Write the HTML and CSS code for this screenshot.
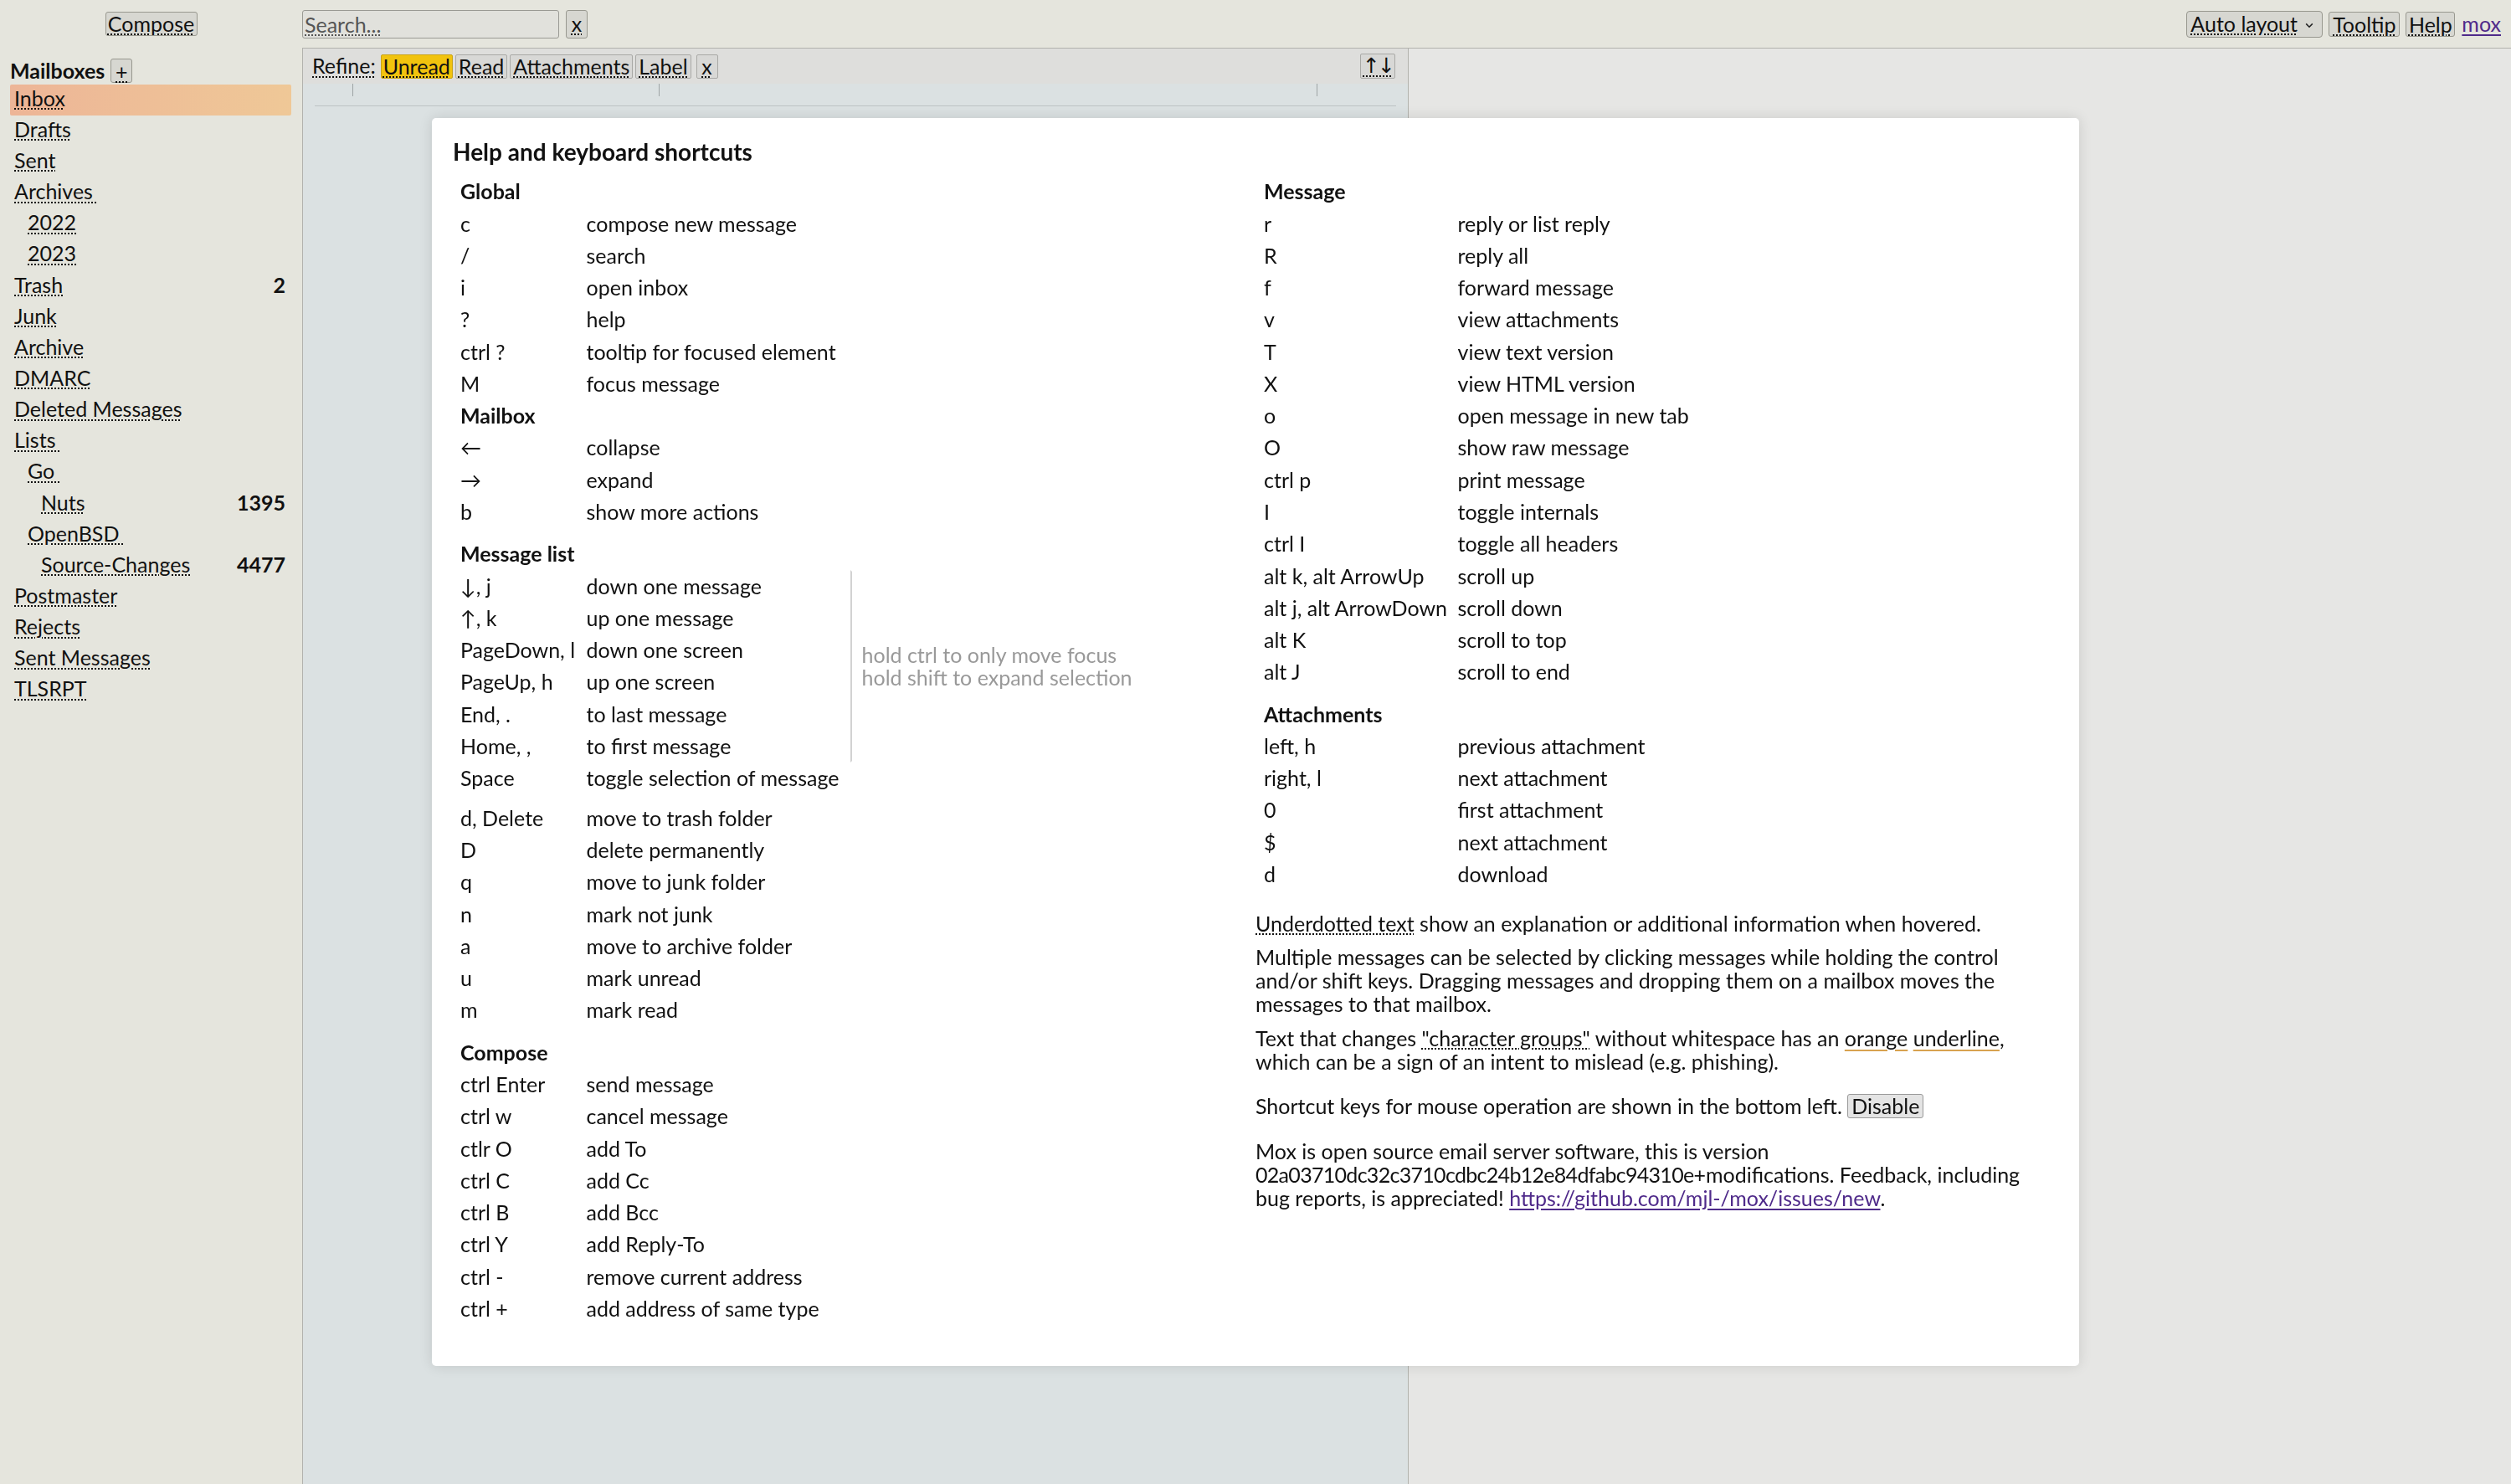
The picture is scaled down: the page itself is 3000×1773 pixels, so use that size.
FILE: index.html
```html
<!DOCTYPE html>
<html lang="en">
<head>
<meta charset="utf-8">
<title>Mox Webmail</title>
<link rel="stylesheet" href="styles.css">
</head>
<body>
<div class="app">
  <header class="topbar">
    <div class="topleft"><button class="btn compose"><span class="tt">Compose</span></button></div>
    <div class="search"><span class="tt">Search...</span></div>
    <button class="btn xbtn"><span class="tt">x</span></button>
    <div class="topright">
      <button class="btn select"><span class="tt">Auto layout</span><svg class="chev" width="10" height="7" viewBox="0 0 10 7"><path d="M1.2 1.4 L5 5.2 L8.8 1.4" fill="none" stroke="#222" stroke-width="1.5"/></svg></button>
      <button class="btn tbtn tooltip"><span class="tt">Tooltip</span></button>
      <button class="btn tbtn help"><span class="tt">Help</span></button>
      <a class="moxlink" href="#">mox</a>
    </div>
  </header>
  <div class="main">
    <aside class="mailboxes">
      <div class="mbhead"><span class="mbtitle">Mailboxes</span><button class="btn plus"><span class="tt">+</span></button></div>
      <div class="mb sel"><span class="tt">Inbox</span></div>
      <div class="mb"><span class="tt">Drafts</span></div>
      <div class="mb"><span class="tt">Sent</span></div>
      <div class="mb"><span class="tt">Archives&nbsp;</span></div>
      <div class="mb l1"><span class="tt">2022</span></div>
      <div class="mb l1"><span class="tt">2023</span></div>
      <div class="mb"><span class="tt">Trash</span><span class="cnt">2</span></div>
      <div class="mb"><span class="tt">Junk</span></div>
      <div class="mb"><span class="tt">Archive</span></div>
      <div class="mb"><span class="tt">DMARC</span></div>
      <div class="mb"><span class="tt">Deleted Messages</span></div>
      <div class="mb"><span class="tt">Lists&nbsp;</span></div>
      <div class="mb l1"><span class="tt">Go&nbsp;</span></div>
      <div class="mb l2"><span class="tt">Nuts</span><span class="cnt">1395</span></div>
      <div class="mb l1"><span class="tt">OpenBSD&nbsp;</span></div>
      <div class="mb l2"><span class="tt">Source-Changes</span><span class="cnt">4477</span></div>
      <div class="mb"><span class="tt">Postmaster</span></div>
      <div class="mb"><span class="tt">Rejects</span></div>
      <div class="mb"><span class="tt">Sent Messages</span></div>
      <div class="mb"><span class="tt">TLSRPT</span></div>
    </aside>
    <section class="msglist">
      <div class="refine">
        <span class="tt refine-label">Refine:</span>
        <div class="rgroup">
          <button class="rbtn on"><span class="tt">Unread</span></button>
          <button class="rbtn"><span class="tt">Read</span></button>
          <button class="rbtn"><span class="tt">Attachments</span></button>
          <button class="rbtn"><span class="tt">Label</span></button>
        </div>
        <button class="rbtn rx"><span class="tt">x</span></button>
        <button class="rbtn sort"><span class="tt">↑↓</span></button>
      </div>
      <div class="listhead">
        <div class="lh c1"></div><div class="lh c2"></div><div class="lh c3"></div><div class="lh c4"></div>
      </div>
    </section>
    <section class="msgview"></section>
  </div>

  <div class="overlay">
    <div class="popup">
      <h1 class="help-title">Help and keyboard shortcuts</h1>
      <div class="help-cols">
        <div class="help-col">
          <table class="keys">
            <colgroup><col class="lk"><col class="ld"><col class="ls"></colgroup>
            <tr><td colspan="3" class="k"><h2>Global</h2></td></tr>
            <tr><td class="k">c</td><td>compose new message</td></tr>
            <tr><td class="k">/</td><td>search</td></tr>
            <tr><td class="k">i</td><td>open inbox</td></tr>
            <tr><td class="k">?</td><td>help</td></tr>
            <tr><td class="k">ctrl ?</td><td>tooltip for focused element</td></tr>
            <tr><td class="k">M</td><td>focus message</td></tr>
            <tr><td colspan="3" class="k"><h2>Mailbox</h2></td></tr>
            <tr><td class="k">←</td><td>collapse</td></tr>
            <tr><td class="k">→</td><td>expand</td></tr>
            <tr><td class="k">b</td><td>show more actions</td></tr>
            <tr class="gap"><td colspan="3" class="k"><h2>Message list</h2></td></tr>
            <tr><td class="k">↓, j</td><td>down one message</td><td rowspan="6" class="side"><div>hold ctrl to only move focus</div><div>hold shift to expand selection</div></td></tr>
            <tr><td class="k">↑, k</td><td>up one message</td></tr>
            <tr><td class="k">PageDown, l</td><td>down one screen</td></tr>
            <tr><td class="k">PageUp, h</td><td>up one screen</td></tr>
            <tr><td class="k">End, .</td><td>to last message</td></tr>
            <tr><td class="k">Home, ,</td><td>to first message</td></tr>
            <tr><td class="k">Space</td><td>toggle selection of message</td></tr>
            <tr class="gap-s"><td class="k">d, Delete</td><td>move to trash folder</td></tr>
            <tr><td class="k">D</td><td>delete permanently</td></tr>
            <tr><td class="k">q</td><td>move to junk folder</td></tr>
            <tr><td class="k">n</td><td>mark not junk</td></tr>
            <tr><td class="k">a</td><td>move to archive folder</td></tr>
            <tr><td class="k">u</td><td>mark unread</td></tr>
            <tr><td class="k">m</td><td>mark read</td></tr>
            <tr class="gap"><td colspan="3" class="k"><h2>Compose</h2></td></tr>
            <tr><td class="k">ctrl Enter</td><td>send message</td></tr>
            <tr><td class="k">ctrl w</td><td>cancel message</td></tr>
            <tr><td class="k">ctlr O</td><td>add To</td></tr>
            <tr><td class="k">ctrl C</td><td>add Cc</td></tr>
            <tr><td class="k">ctrl B</td><td>add Bcc</td></tr>
            <tr><td class="k">ctrl Y</td><td>add Reply-To</td></tr>
            <tr><td class="k">ctrl -</td><td>remove current address</td></tr>
            <tr><td class="k">ctrl +</td><td>add address of same type</td></tr>
          </table>
        </div>
        <div class="help-col">
          <table class="keys">
            <colgroup><col class="rk"><col class="rd"></colgroup>
            <tr><td colspan="2" class="k"><h2>Message</h2></td></tr>
            <tr><td class="k">r</td><td>reply or list reply</td></tr>
            <tr><td class="k">R</td><td>reply all</td></tr>
            <tr><td class="k">f</td><td>forward message</td></tr>
            <tr><td class="k">v</td><td>view attachments</td></tr>
            <tr><td class="k">T</td><td>view text version</td></tr>
            <tr><td class="k">X</td><td>view HTML version</td></tr>
            <tr><td class="k">o</td><td>open message in new tab</td></tr>
            <tr><td class="k">O</td><td>show raw message</td></tr>
            <tr><td class="k">ctrl p</td><td>print message</td></tr>
            <tr><td class="k">I</td><td>toggle internals</td></tr>
            <tr><td class="k">ctrl I</td><td>toggle all headers</td></tr>
            <tr><td class="k">alt k, alt ArrowUp</td><td>scroll up</td></tr>
            <tr><td class="k">alt j, alt ArrowDown</td><td>scroll down</td></tr>
            <tr><td class="k">alt K</td><td>scroll to top</td></tr>
            <tr><td class="k">alt J</td><td>scroll to end</td></tr>
            <tr class="gap"><td colspan="2" class="k"><h2>Attachments</h2></td></tr>
            <tr><td class="k">left, h</td><td>previous attachment</td></tr>
            <tr><td class="k">right, l</td><td>next attachment</td></tr>
            <tr><td class="k">0</td><td>first attachment</td></tr>
            <tr><td class="k">$</td><td>next attachment</td></tr>
            <tr><td class="k">d</td><td>download</td></tr>
          </table>
          <p class="hp hp-first"><span class="tt">Underdotted text</span> show an explanation or additional information when hovered.</p>
          <p class="hp">Multiple messages can be selected by clicking messages while holding the control<br>and/or shift keys. Dragging messages and dropping them on a mailbox moves the<br>messages to that mailbox.</p>
          <p class="hp">Text that changes <span class="tt">"character groups"</span> without whitespace has an <span class="scriptswitch">orange</span> <span class="scriptswitch">underline</span>,<br>which can be a sign of an intent to mislead (e.g. phishing).</p>
          <p class="hp hp-wide">Shortcut keys for mouse operation are shown in the bottom left. <button class="btn disable">Disable</button></p>
          <p class="hp hp-wide">Mox is open source email server software, this is version<br><span class="hash">02a03710dc32c3710cdbc24b12e84dfabc94310e</span>+modifications. Feedback, including<br>bug reports, is appreciated! <a class="link" href="#">https://github.com/mjl-/mox/issues/new</a>.</p>
        </div>
      </div>
    </div>
  </div>
</div>
</body>
</html>
```

FILE: styles.css
```css
* { box-sizing: border-box; }
html, body { margin: 0; padding: 0; }
body {
  font-family: Lato, "Open Sans", "DejaVu Sans", sans-serif;
  font-size: 25px;
  line-height: 27.6px;
  color: #111;
  background: #e6e6e4;
  overflow: hidden;
}
.app {
  display: flex;
  flex-direction: column;
  height: 1773px;
}
.tt {
  text-decoration: underline dotted;
  text-decoration-thickness: 2px;
  text-underline-offset: 3px;
}

/* buttons */
.btn {
  font: inherit;
  line-height: 27.6px;
  color: #111;
  background: #d7d7d1;
  border: 1px solid #98988f;
  border-radius: 3px;
  padding: 0 5px;
  margin: 0;
}
.compose {
  width: 110px;
  height: 29.6px;
  padding: 0;
  text-align: center;
}

/* top bar */
.topbar {
  flex: none;
  display: flex;
  align-items: center;
  height: 57px;
  background: #e5e5dd;
}
.topleft {
  width: 361px;
  display: flex;
  justify-content: center;
}
.search {
  width: 307px;
  height: 34px;
  background: #e1e1dc;
  border: 1px solid #9a9a94;
  border-radius: 3px;
  padding: 2px 2px 0;
  color: #555;
  line-height: 28px;
}
.xbtn {
  height: 34px;
  width: 26px;
  padding: 0;
  margin-left: 8px;
}
.topright {
  margin-left: auto;
  padding-right: 12px;
  display: flex;
  align-items: center;
  gap: 7px;
}
.select {
  width: 163px;
  height: 32px;
  border-radius: 4px;
  padding: 0 10px 0 4px;
  display: flex;
  align-items: center;
  justify-content: space-between;
}
.chev { margin-top: 3px; }
.tbtn {
  height: 30px;
  padding: 0;
  text-align: center;
  line-height: 28px;
}
.tooltip { width: 85px; }
.help { width: 59px; }
.moxlink {
  color: #4f2a8a;
  text-decoration: underline;
  text-underline-offset: 3px;
  margin-left: 1px;
}

/* main area */
.main {
  flex: 1;
  display: flex;
  min-height: 0;
}
.mailboxes {
  width: 361px;
  flex: none;
  background: #e5e5dd;
  padding: 0 13px 0 12px;
}
.mbhead {
  height: 43.7px;
  padding-top: 12px;
  display: flex;
  align-items: center;
  gap: 7px;
}
.mbtitle { font-weight: 700; }
.plus {
  height: 29px;
  width: 26px;
  padding: 0;
  line-height: 26px;
}
.mb {
  height: 37.15px;
  padding: 3px 7px 0 5px;
  display: flex;
  justify-content: space-between;
  white-space: nowrap;
}
.mb.l1 { padding-left: 21px; }
.mb.l2 { padding-left: 37px; }
.mb.sel {
  background: linear-gradient(to right, #edb597, #efc897);
  border-radius: 2px;
}
.cnt { font-weight: 700; }

.msglist {
  width: 1321px;
  flex: none;
  border-left: 1px solid #b2b2ad;
  border-top: 1px solid #b2b2ad;
  background: #dbe1e2;
}
.refine {
  height: 42px;
  background: #dededc;
  display: flex;
  align-items: center;
  padding: 0 15px 0 11px;
}
.refine-label { margin-right: 6px; }
.rgroup { display: flex; gap: 3px; }
.rbtn {
  font: inherit;
  color: #111;
  height: 29px;
  line-height: 27px;
  background: #d8d8d6;
  border: 1px solid #a9a9a6;
  border-radius: 2px;
  padding: 0 3px;
  margin: 0;
}
.rbtn.on { background: #f1c30e; border-color: #c9a41a; padding: 0 2px; }
.rx { margin-left: 6px; width: 26px; padding: 0; }
.sort {
  margin-left: auto;
  width: 42px;
  height: 30px;
  padding: 0;
  font-family: "DejaVu Sans", sans-serif;
  font-size: 25px;
  line-height: 28px;
  letter-spacing: -3px;
}
.listhead {
  margin: 0 14px;
  height: 27px;
  display: flex;
  border-bottom: 1px solid #bcc3c4;
}
.lh { height: 15px; }
.lh.c1 { width: 46px; border-right: 1px solid #9ea4a5; }
.lh.c2 { width: 366px; border-right: 1px solid #9ea4a5; }
.lh.c3 { width: 786px; border-right: 1px solid #9ea4a5; }
.lh.c4 { flex: 1; }

.msgview {
  flex: 1;
  border-left: 1px solid #b2b2ad;
  border-top: 1px solid #b2b2ad;
  background: #e6e6e4;
}

/* help popup */
.overlay {
  position: fixed;
  inset: 0;
  display: flex;
  align-items: center;
  justify-content: center;
}
.popup {
  background: #fff;
  padding: 21px 24px 49.6px 24px;
  border-radius: 5px;
  box-shadow: 0 0 16px rgba(0, 0, 0, 0.12);
}
.help-title {
  margin: 0 0 10.13px 0;
  font-size: 28px;
  line-height: 38.27px;
  font-weight: 700;
  padding-left: 1px;
}
.help-cols { display: flex; }
.help-col { width: 960px; }
.keys {
  width: 960px;
  table-layout: fixed;
  border-collapse: separate;
  border-spacing: 0;
  white-space: nowrap;
}
.keys col.lk { width: 160.5px; }
.keys col.ld { width: 315px; }
.keys col.rk { width: 241.5px; }
.keys tr { height: 38.27px; }
.keys tr.gap { height: 50.27px; }
.keys tr.gap td { padding-top: 12px; }
.keys tr.gap-s { height: 47.77px; }
.keys tr.gap-s td { padding-top: 9.5px; }
.keys td {
  padding: 0;
  vertical-align: middle;
}
.keys td.k { padding-left: 10px; }
.keys h2 {
  margin: 0;
  font-size: inherit;
  font-weight: 700;
}
.keys td.side {
  border-left: 2px solid #d2d2d2;
  border-top: 2px solid transparent;
  border-bottom: 2px solid transparent;
  padding-left: 12px;
  color: #999;
  line-height: 27.3px;
}
.hp {
  margin: 0 0 12.4px 0;
  white-space: nowrap;
  line-height: 28px;
}
.hp-first { margin-top: 25px; }
.hp-wide { margin-top: 25px; }
.hash { letter-spacing: -0.7px; }
.scriptswitch {
  text-decoration: underline solid #d8a24f;
  text-decoration-thickness: 2px;
  text-underline-offset: 4px;
}
.disable {
  padding: 0 4px;
  background: #e4e4e4;
  border-color: #9a9a9a;
}
.link {
  color: #4f2a8a;
  text-decoration: underline;
  text-underline-offset: 3px;
}
```
